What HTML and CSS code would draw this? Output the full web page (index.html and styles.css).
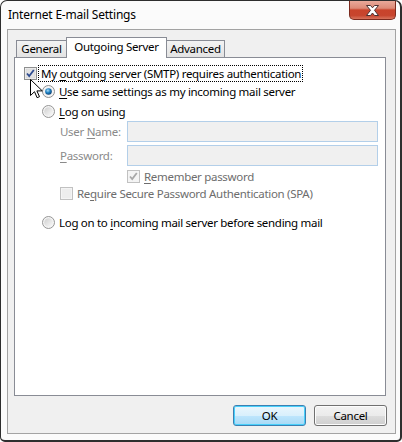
FILE: index.html
```html
<!DOCTYPE html>
<html>
<head>
<meta charset="utf-8">
<link rel="stylesheet" href="styles.css">
</head>
<body>
<div class="window">
  <div class="titlebar">
    <span class="title">Internet E-mail Settings</span>
    <div class="close">
      <svg width="17" height="11" viewBox="0 0 17 11"><path d="M2.5 0.5h4l2 2.3 2-2.3h4l-4 4.8 4 5.2h-4l-2-2.5-2 2.5h-4l4-5.2z" fill="#fff" stroke="#4a3030" stroke-width="1" stroke-linejoin="round"/></svg>
    </div>
  </div>
  <div class="client">
    <div class="tabs">
      <div class="tab t1">General</div>
      <div class="tab active">Outgoing Server</div>
      <div class="tab t3">Advanced</div>
    </div>
    <div class="panel">
      <div class="row r1">
        <span class="cb cb-on"><svg width="13" height="13" viewBox="0 0 13 13"><rect x="0.5" y="0.5" width="12" height="12" fill="#f4f4f4" stroke="#8e8f8f"/><rect x="2" y="2" width="9" height="9" fill="#e3e3e3" stroke="#c9c9c9" stroke-width="0.5"/><path d="M3 6.5l2.2 2.5 4.6-6" fill="none" stroke="#2f4c91" stroke-width="1.8"/></svg></span>
        <span class="focus">My <u>o</u>utgoing server (SMTP) requires authentication</span>
      </div>
      <div class="row r2 indent1">
        <span class="rb"><svg width="13" height="13" viewBox="0 0 13 13"><defs><radialGradient id="g1" cx="0.4" cy="0.35" r="0.7"><stop offset="0" stop-color="#a9dcf7"/><stop offset="0.5" stop-color="#1b7fc2"/><stop offset="1" stop-color="#0d3a6a"/></radialGradient></defs><circle cx="6.5" cy="6.5" r="6" fill="#f3f3f3" stroke="#8f8f8f"/><circle cx="6.5" cy="6.5" r="3.3" fill="url(#g1)"/></svg></span>
        <span class="lbl"><u>U</u>se same settings as my incoming mail server</span>
      </div>
      <div class="row r3 indent1">
        <span class="rb"><svg width="13" height="13" viewBox="0 0 13 13"><defs><linearGradient id="g2" x1="0" y1="0" x2="1" y2="1"><stop offset="0" stop-color="#cfcfcf"/><stop offset="1" stop-color="#fafafa"/></linearGradient></defs><circle cx="6.5" cy="6.5" r="6" fill="#f4f4f4" stroke="#959595"/><circle cx="6.5" cy="6.5" r="4.3" fill="url(#g2)"/></svg></span>
        <span class="lbl"><u>L</u>og on using</span>
      </div>
      <div class="row r4 indent2">
        <span class="flabel">User <u>N</u>ame:</span>
        <span class="input"></span>
      </div>
      <div class="row r5 indent2">
        <span class="flabel"><u>P</u>assword:</span>
        <span class="input"></span>
      </div>
      <div class="row r6 indent3">
        <span class="cb"><svg width="13" height="13" viewBox="0 0 13 13"><rect x="0.5" y="0.5" width="12" height="12" fill="#f4f4f4" stroke="#c1c1c1"/><path d="M3 6.5l2.2 2.5 4.6-6" fill="none" stroke="#a8a8a8" stroke-width="1.8"/></svg></span>
        <span class="lbl dis"><u>R</u>emember password</span>
      </div>
      <div class="row r7 indent2">
        <span class="cb"><svg width="13" height="13" viewBox="0 0 13 13"><rect x="0.5" y="0.5" width="12" height="12" fill="#f4f4f4" stroke="#c1c1c1"/><rect x="2" y="2" width="9" height="9" fill="#ededed"/></svg></span>
        <span class="lbl dis">Re<u>q</u>uire Secure Password Authentication (SPA)</span>
      </div>
      <div class="row r8 indent1">
        <span class="rb"><svg width="13" height="13" viewBox="0 0 13 13"><defs><linearGradient id="g3" x1="0" y1="0" x2="1" y2="1"><stop offset="0" stop-color="#cfcfcf"/><stop offset="1" stop-color="#fafafa"/></linearGradient></defs><circle cx="6.5" cy="6.5" r="6" fill="#f4f4f4" stroke="#959595"/><circle cx="6.5" cy="6.5" r="4.3" fill="url(#g3)"/></svg></span>
        <span class="lbl">Log on to <u>i</u>ncoming mail server before sending mail</span>
      </div>
      <svg class="cursor" width="13" height="20" viewBox="0 0 13 20"><path d="M0.5 0.5v16l4-3.8 2.6 6 2.4-1-2.6-5.8h5.4z" fill="#fff" stroke="#000" stroke-width="1" stroke-linejoin="miter"/></svg>
    </div>
    <div class="buttons">
      <div class="btn default">OK</div>
      <div class="btn">Cancel</div>
    </div>
  </div>
</div>
</body>
</html>
```

FILE: styles.css
```css
html, body {
  margin: 0;
  padding: 0;
  background: #ffffff;
}
body {
  font-family: "Noto Sans", "Open Sans", sans-serif;
  font-size: 11.5px;
  letter-spacing: -0.3px;
  color: #000;
}
.window {
  width: 402px;
  height: 442px;
  box-sizing: border-box;
  border-style: solid;
  border-color: #2e2e2e;
  border-width: 1px 2px 2px 1px;
  border-radius: 7px 7px 5px 5px;
  background: #fbfbfb;
  padding: 0 4px 6px 6px;
  display: flex;
  flex-direction: column;
}
.titlebar {
  height: 28px;
  display: flex;
  justify-content: space-between;
  align-items: flex-start;
  flex-shrink: 0;
}
.title {
  margin-left: 1px;
  line-height: 28px;
  font-size: 12px;
  letter-spacing: -0.2px;
  color: #000;
}
.close {
  width: 47px;
  height: 19px;
  box-sizing: border-box;
  border: 1px solid #7b2a1e;
  border-top: none;
  border-radius: 0 0 5px 5px;
  background: linear-gradient(#e9a99a 0%, #dd8a77 40%, #c9432b 50%, #c7452e 80%, #d8735c 100%);
  display: flex;
  align-items: center;
  justify-content: center;
}
.client {
  flex: 1;
  border: 1px solid #a3a3a3;
  background: #f0f0f0;
  padding: 7px 8px 0 6px;
  display: flex;
  flex-direction: column;
}
.tabs {
  display: flex;
  align-items: flex-end;
  margin-left: 2px;
  height: 20px;
  position: relative;
  z-index: 1;
}
.tab {
  height: 17px;
  box-sizing: border-box;
  border: 1px solid #898c95;
  border-bottom: none;
  background: linear-gradient(#f3f3f3, #e3e3e3);
  line-height: 16px;
  text-align: center;
  white-space: nowrap;
  margin-left: -1px;
}
.tab.t1 {
  margin-left: 0;
  width: 51px;
}
.tab.active {
  height: 21px;
  margin-bottom: -1px;
  background: #fff;
  width: 101px;
  line-height: 17px;
  padding-bottom: 3px;
}
.tab.t3 {
  width: 59px;
}
.panel {
  height: 339px;
  box-sizing: border-box;
  border: 1px solid #898c95;
  background: #fff;
  margin-right: 1px;
  padding-top: 7px;
  position: relative;
}
.row {
  display: flex;
  align-items: center;
  height: 16px;
  white-space: nowrap;
}
.r1 { padding-left: 9px; }
.r2 { margin-top: 2px; }
.r3 { margin-top: 4px; }
.r4 { margin-top: 2px; height: 21px; }
.r5 { margin-top: 3px; height: 21px; }
.r6 { margin-top: 2px; }
.r7 { margin-top: 1px; }
.r8 { margin-top: 13px; }
.indent1 { padding-left: 27px; }
.indent2 { padding-left: 45px; }
.indent3 { padding-left: 112px; }
.cb, .rb {
  width: 13px;
  height: 13px;
  display: block;
  flex-shrink: 0;
}
.cb svg, .rb svg { display: block; }
.focus {
  margin-left: 2px;
  padding: 0 1px 0 2px;
  outline: 1px dotted #000;
  line-height: 15px;
}
.lbl {
  margin-left: 4px;
}
.lbl.dis {
  color: #6d6d6d;
}
.flabel {
  width: 67px;
  color: #8a8a8a;
  flex-shrink: 0;
}
.input {
  width: 251px;
  height: 21px;
  box-sizing: border-box;
  border: 1px solid #b3cfe9;
  background: #f0f0f0;
  display: block;
}
u {
  text-decoration: underline;
  text-underline-offset: 2px;
}
.cursor {
  position: absolute;
  left: 15px;
  top: 21px;
}
.buttons {
  display: flex;
  justify-content: flex-end;
  gap: 8px;
  padding-top: 9px;
}
.btn {
  width: 73px;
  height: 21px;
  box-sizing: border-box;
  border: 1px solid #707070;
  border-radius: 3px;
  background: linear-gradient(#f2f2f2 0%, #ebebeb 50%, #dddddd 51%, #cfcfcf 100%);
  text-align: center;
  line-height: 19px;
  box-shadow: inset 0 0 0 1px #fcfcfc;
}
.btn.default {
  border-color: #3c7fb1;
  background: linear-gradient(#eaf6fd 0%, #d9f0fc 50%, #bee6fd 51%, #a7d9f5 100%);
  box-shadow: inset 0 0 0 1px #48d0fb;
}
```
